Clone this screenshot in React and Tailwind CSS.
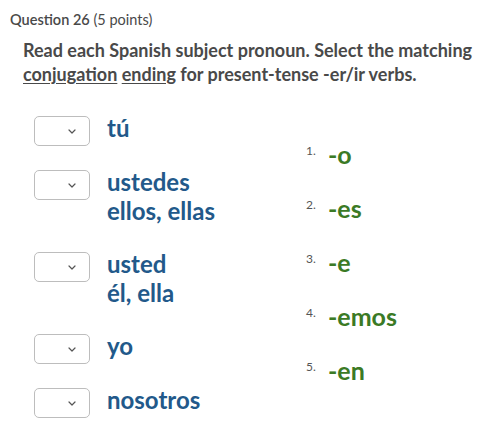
import React from 'react';

const pronouns = [
  ['tú'],
  ['ustedes', 'ellos, ellas'],
  ['usted', 'él, ella'],
  ['yo'],
  ['nosotros'],
];

const endings = ['-o', '-es', '-e', '-emos', '-en'];

const Chevron = () => (
  <svg width="8" height="5" viewBox="0 0 8 5" fill="none">
    <path d="M1 1l3 3 3-3" stroke="#555" strokeWidth="1.2" strokeLinecap="round" strokeLinejoin="round" />
  </svg>
);

export default function App() {
  return (
    <div className="w-[498px] h-[429px] bg-white overflow-hidden font-['Lato',sans-serif]">
      <div className="pl-[10px] pt-[11px] text-[14.5px] leading-[18px] text-[#494949]">
        <span className="font-semibold">Question 26</span> <span>(5 points)</span>
      </div>
      <p className="pl-[23px] pt-[9px] text-[18px] leading-[24px] font-bold text-[#494949]">
        Read each Spanish subject pronoun. Select the matching{' '}
        <span className="underline underline-offset-2">conjugation</span>{' '}
        <span className="underline underline-offset-2">ending</span> for present-tense -er/ir verbs.
      </p>

      <div className="flex pl-[34px] pt-[30px]">
        {/* pronouns with dropdowns */}
        <div className="w-[272px] flex flex-col gap-[24px]">
          {pronouns.map((lines, i) => (
            <div key={i} className="flex items-start">
              <div className="w-[56px] h-[30px] border border-[#bdbdbd] rounded-[5px] flex items-center justify-end pr-[13px] shrink-0">
                <Chevron />
              </div>
              <div className="ml-[17px] -mt-[3px] pb-[3px] text-[24px] leading-[29px] font-bold text-[#22598a]">
                {lines.map((l) => (
                  <div key={l}>{l}</div>
                ))}
              </div>
            </div>
          ))}
        </div>

        {/* numbered endings */}
        <ol className="pt-[24px] flex flex-col gap-[26px]">
          {endings.map((e, i) => (
            <li key={e} className="flex items-start">
              <span className="w-[22px] mt-[4px] text-[12px] leading-[14px] text-[#555]">{i + 1}.</span>
              <span className="text-[25px] leading-[28px] font-bold text-[#3b7a25]">{e}</span>
            </li>
          ))}
        </ol>
      </div>
    </div>
  );
}
